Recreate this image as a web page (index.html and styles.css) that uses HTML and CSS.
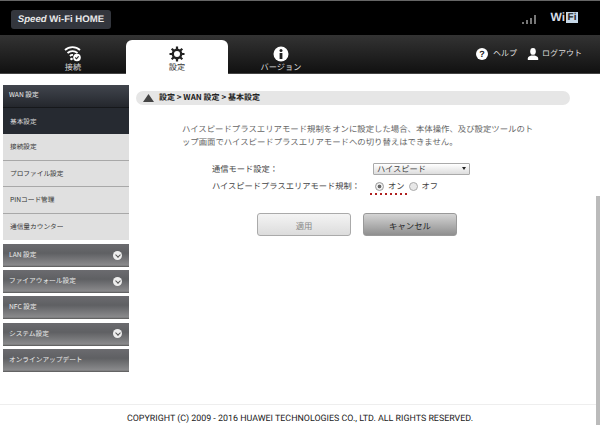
FILE: index.html
```html
<!DOCTYPE html>
<html lang="ja">
  <head>
    <meta charset="UTF-8" />
    <meta name="viewport" content="width=device-width, initial-scale=1.0" />
    <title>Speed Wi-Fi HOME</title>
    <link rel="stylesheet" href="styles.css">
  </head>
  <body>
    <header class="topbar">
      <div class="logo"><i>Speed</i> Wi-Fi HOME</div>
      <div class="status">
        <svg class="signal" width="15" height="9" viewBox="0 0 15 9">
          <rect x="0" y="7" width="2" height="2" fill="#777"/>
          <rect x="4" y="5" width="2" height="4" fill="#777"/>
          <rect x="8" y="3" width="2" height="6" fill="#777"/>
          <rect x="12" y="0" width="2" height="9" fill="#777"/>
        </svg>
        <div class="wifi">Wi<span>Fi</span></div>
      </div>
    </header>

    <nav class="nav">
      <div class="tabs">
        <a class="tab">
          <svg width="18" height="16" viewBox="0 0 18 16" fill="none" stroke="#fff" stroke-width="1.8">
            <path d="M1 4a11 11 0 0 1 15 0"/>
            <path d="M3.5 7a7.5 7.5 0 0 1 10 0"/>
            <path d="M6 10a3.5 3.5 0 0 1 3-1"/>
            <circle cx="7.5" cy="13" r="1.3" fill="#fff" stroke="none"/>
            <circle cx="13" cy="11.5" r="3.8" fill="#fff" stroke="none"/>
            <path d="M11.3 11.5l1.3 1.3 2-2.4" stroke="#222" stroke-width="1.1"/>
          </svg>
          <span>接続</span>
        </a>
        <a class="tab active">
          <svg width="16" height="16" viewBox="0 0 16 16" fill="none" stroke="#222">
            <circle cx="8" cy="8" r="4.2" stroke-width="2.4"/>
            <path d="M8 0.5v3M8 12.5v3M0.5 8h3M12.5 8h3M2.7 2.7l2.1 2.1M11.2 11.2l2.1 2.1M2.7 13.3l2.1-2.1M11.2 4.8l2.1-2.1" stroke-width="2.2"/>
          </svg>
          <span>設定</span>
        </a>
        <a class="tab">
          <svg width="16" height="16" viewBox="0 0 16 16">
            <circle cx="8" cy="8" r="7.5" fill="#fff"/>
            <rect x="6.6" y="7" width="2.8" height="6" fill="#222"/>
            <circle cx="8" cy="4.6" r="1.5" fill="#222"/>
          </svg>
          <span>バージョン</span>
        </a>
      </div>
      <div class="links">
        <a class="link">
          <span class="help-icon">?</span>ヘルプ
        </a>
        <a class="link user">
          <svg width="12" height="12" viewBox="0 0 12 12" fill="#fff">
            <ellipse cx="6" cy="3.4" rx="2.8" ry="3.4"/>
            <path d="M0.8 12v-1.6c0-1.6 2-2.4 3.4-2.9h3.6c1.4.5 3.4 1.3 3.4 2.9V12z"/>
          </svg>ログアウト
        </a>
      </div>
    </nav>

    <div class="page">
      <aside class="sidebar">
        <div class="group open">WAN 設定</div>
        <ul class="submenu">
          <li class="current">基本設定</li>
          <li>接続設定</li>
          <li>プロファイル設定</li>
          <li>PINコード管理</li>
          <li>通信量カウンター</li>
        </ul>
        <div class="group">LAN 設定<span class="chevron"></span></div>
        <div class="group">ファイアウォール設定<span class="chevron"></span></div>
        <div class="group">NFC 設定</div>
        <div class="group">システム設定<span class="chevron"></span></div>
        <div class="group">オンラインアップデート</div>
      </aside>

      <main class="content">
        <div class="crumb">
          <svg width="11" height="8" viewBox="0 0 11 8"><path d="M5.5 0L11 8H0z" fill="#444"/></svg>
          <span>設定 &gt; WAN 設定 &gt; 基本設定</span>
        </div>
        <p class="note">ハイスピードプラスエリアモード規制をオンに設定した場合、本体操作、及び設定ツールのト<br>ップ画面でハイスピードプラスエリアモードへの切り替えはできません。</p>
        <div class="form">
          <div class="row">
            <label>通信モード設定：</label>
            <div class="select">ハイスピード<span class="arrow"></span></div>
          </div>
          <div class="row">
            <label>ハイスピードプラスエリアモード規制：</label>
            <div class="radios">
              <span class="radio checked"></span>オン
              <span class="radio"></span>オフ
              <span class="dots"></span>
            </div>
          </div>
        </div>
        <div class="actions">
          <button class="btn disabled">適用</button>
          <button class="btn">キャンセル</button>
        </div>
      </main>
    </div>

    <footer class="footer">COPYRIGHT (C) 2009 - 2016 HUAWEI TECHNOLOGIES CO., LTD. ALL RIGHTS RESERVED.</footer>
    <div class="scrollbar"></div>
  </body>
</html>
```

FILE: styles.css
```css
html,
body {
  height: 429px;
  margin: 0;
  overflow: hidden;
}

body {
  position: relative;
  display: flex;
  flex-direction: column;
  background-color: #fff;
  font-family: "Noto Sans CJK JP", "Liberation Sans", sans-serif;
  color: #333;
  text-rendering: geometricPrecision;
}

.topbar {
  display: flex;
  justify-content: space-between;
  align-items: center;
  height: 34px;
  padding: 0 17px 0 11px;
  background-color: #000;
  border-top: 1px solid #666;
}

.logo {
  width: 100px;
  height: 19px;
  margin-top: 3px;
  line-height: 19px;
  text-align: center;
  border-radius: 3px;
  background-color: #33363d;
  color: #e8e8e8;
  font-family: "Liberation Sans", sans-serif;
  font-size: 9.6px;
  font-weight: bold;
  white-space: nowrap;
}

.status {
  display: flex;
  align-items: center;
  gap: 13px;
}

.signal {
  margin-top: 3px;
}

.wifi {
  display: flex;
  align-items: center;
  margin-bottom: 2px;
  padding-right: 5px;
  color: #d5dce4;
  font-family: "Liberation Sans", sans-serif;
  font-size: 12px;
  font-weight: bold;
  line-height: 11px;
}

.wifi span {
  width: 12px;
  margin-left: 1px;
  text-align: center;
  background-color: #c6d8e8;
  color: #222;
  font-size: 10px;
}

.nav {
  display: flex;
  justify-content: space-between;
  height: 38px;
  padding: 0 18px 0 22px;
  background: linear-gradient(#333, #111);
  border-bottom: 1px solid #444;
}

.tabs {
  display: flex;
  gap: 2px;
  align-items: flex-end;
}

.tab {
  display: flex;
  flex-direction: column;
  align-items: center;
  justify-content: flex-end;
  width: 102px;
  height: 34px;
  margin-bottom: -1px;
  padding-bottom: 1px;
  box-sizing: border-box;
  color: #ddd;
  font-size: 8.2px;
  line-height: 11px;
  border-radius: 6px 6px 0 0;
}

.tab.active {
  background-color: #fff;
  color: #333;
}

.links {
  display: flex;
  gap: 10px;
  align-items: flex-start;
  padding-top: 12px;
}

.link {
  display: flex;
  align-items: center;
  gap: 5px;
  height: 13px;
  color: #ddd;
  font-size: 8px;
}

.link.user {
  gap: 3px;
}

.help-icon {
  width: 12px;
  height: 12px;
  border-radius: 50%;
  background-color: #fff;
  color: #222;
  font-family: "Liberation Sans", sans-serif;
  font-size: 9px;
  font-weight: bold;
  line-height: 12px;
  text-align: center;
}

.page {
  display: flex;
  flex: 1;
  padding: 11px 0 0 3px;
}

.sidebar {
  width: 126px;
  flex-shrink: 0;
  font-size: 6.7px;
}

.group {
  display: flex;
  justify-content: space-between;
  align-items: center;
  height: 23px;
  margin-bottom: 3.2px;
  padding: 0 7px 3px 6px;
  box-sizing: border-box;
  background: linear-gradient(#6b6b6f, #5f6063 40%, #8a8a8c 92%, #555);
  color: #eee;
}

.group.open {
  margin-bottom: 0;
  padding-bottom: 5px;
  background: linear-gradient(#41454d, #24272d);
  border-bottom: 1px solid #16181b;
}

.chevron {
  position: relative;
  width: 9px;
  height: 9px;
  margin-top: 2px;
  border-radius: 50%;
  background-color: #eee;
}

.chevron::after {
  content: "";
  position: absolute;
  left: 3px;
  top: 2px;
  width: 3px;
  height: 3px;
  border-right: 1px solid #555;
  border-bottom: 1px solid #555;
  transform: rotate(45deg);
}

.submenu {
  margin: 0 0 4px;
  padding: 0;
  list-style: none;
}

.submenu li {
  height: 25.5px;
  padding-left: 7px;
  line-height: 25.5px;
  background-color: #e0e0e0;
  border-bottom: 1px solid #a8a8a8;
  color: #333;
}

.submenu li:last-child {
  border-bottom: 1px solid #e0e0e0;
}

.submenu li.current {
  height: 26px;
  line-height: 27px;
  background-color: #262a31;
  border-bottom: none;
  color: #ddd;
}

.content {
  flex: 1;
  padding: 6px 30px 0 7px;
}

.crumb {
  display: flex;
  align-items: center;
  gap: 5px;
  height: 14px;
  padding-left: 7px;
  border-radius: 7px;
  background-color: #e6e6e6;
  color: #222;
  font-size: 8px;
  font-weight: bold;
}

.crumb svg {
  margin-bottom: 1px;
}

.crumb span {
  padding-bottom: 1px;
}

.note {
  margin: 18px 30px 0 46px;
  font-size: 8.4px;
  line-height: 13px;
  color: #666;
}

.form {
  margin: 11px 0 0 76px;
}

.row {
  display: flex;
  align-items: center;
  height: 17.5px;
  font-size: 8.25px;
  color: #444;
}

.row label {
  width: 161px;
}

.select {
  position: relative;
  width: 97px;
  height: 12px;
  padding-left: 3px;
  box-sizing: border-box;
  line-height: 11px;
  background: linear-gradient(#fff, #ddd);
  border: 1px solid #aaa;
  border-radius: 1px;
}

.arrow {
  position: absolute;
  right: 3px;
  top: 3px;
  border-top: 3px solid #222;
  border-left: 2px solid transparent;
  border-right: 2px solid transparent;
}

.radios {
  position: relative;
  display: flex;
  align-items: center;
  gap: 4px;
  padding-left: 2px;
}

.radio {
  width: 9px;
  height: 9px;
  box-sizing: border-box;
  border-radius: 50%;
  border: 1px solid #aaa;
  background-color: #e8e8e8;
}

.radio.checked {
  border: 1px solid #999;
  background: radial-gradient(circle, #666 0 1.5px, #eee 2.2px);
}

.dots {
  position: absolute;
  left: -3px;
  top: 13px;
  width: 38px;
  height: 2px;
  background: repeating-linear-gradient(90deg, #b02020 0 2px, transparent 2px 5px);
}

.actions {
  display: flex;
  gap: 12px;
  margin: 18px 0 0 121px;
}

.btn {
  width: 94px;
  height: 23px;
  padding: 0;
  border: 1px solid #999;
  border-radius: 3px;
  background: linear-gradient(#d4d4d4, #8f8f8f);
  color: #222;
  font-family: inherit;
  font-size: 8.4px;
}

.btn.disabled {
  background: linear-gradient(#f4f4f4, #dcdcdc);
  border-color: #aaa;
  color: #888;
}

.footer {
  height: 24px;
  line-height: 29px;
  text-align: center;
  border-top: 1px solid #eee;
  font-family: Roboto, sans-serif;
  font-size: 8.88px;
  color: #222;
  white-space: nowrap;
}

.scrollbar {
  position: absolute;
  right: 0;
  top: 196px;
  width: 4px;
  height: 229px;
  background-color: #bbb;
}
```
